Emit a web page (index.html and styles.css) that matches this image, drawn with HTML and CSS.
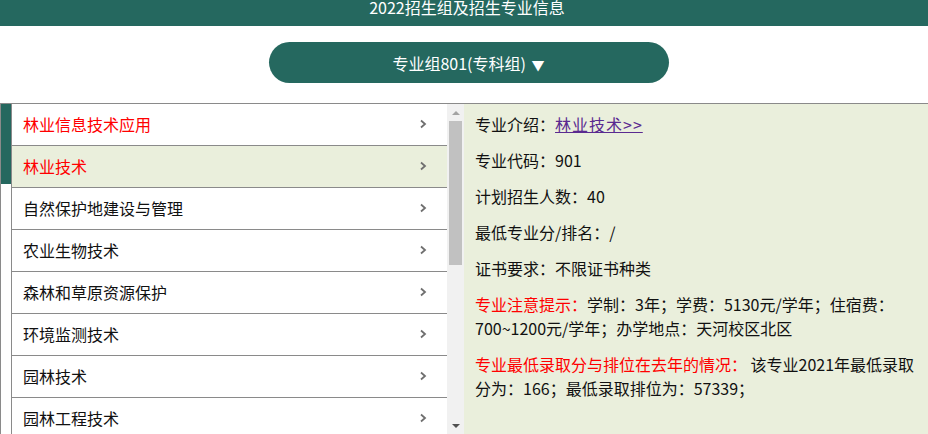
FILE: index.html
```html
<!DOCTYPE html>
<html lang="zh-CN">
<head>
    <meta charset="UTF-8">
    <meta name="viewport" content="width=device-width, initial-scale=1.0">
    <title>2022招生组及招生专业信息</title>
    <link rel="stylesheet" href="styles.css">
</head>
<body>
    <header class="top-bar">
        <h1>2022招生组及招生专业信息</h1>
    </header>

    <div class="group-select">
        <button class="group-btn">专业组801(专科组) <span class="caret">▼</span></button>
    </div>

    <div class="panel">
        <div class="side-mark">
            <div class="mark-bar"></div>
        </div>

        <ul class="major-list">
            <li class="major visited"><span>林业信息技术应用</span><svg class="chev" viewBox="0 0 8 10"><polyline points="2,1.5 6,5 2,8.5"/></svg></li>
            <li class="major active"><span>林业技术</span><svg class="chev" viewBox="0 0 8 10"><polyline points="2,1.5 6,5 2,8.5"/></svg></li>
            <li class="major"><span>自然保护地建设与管理</span><svg class="chev" viewBox="0 0 8 10"><polyline points="2,1.5 6,5 2,8.5"/></svg></li>
            <li class="major"><span>农业生物技术</span><svg class="chev" viewBox="0 0 8 10"><polyline points="2,1.5 6,5 2,8.5"/></svg></li>
            <li class="major"><span>森林和草原资源保护</span><svg class="chev" viewBox="0 0 8 10"><polyline points="2,1.5 6,5 2,8.5"/></svg></li>
            <li class="major"><span>环境监测技术</span><svg class="chev" viewBox="0 0 8 10"><polyline points="2,1.5 6,5 2,8.5"/></svg></li>
            <li class="major"><span>园林技术</span><svg class="chev" viewBox="0 0 8 10"><polyline points="2,1.5 6,5 2,8.5"/></svg></li>
            <li class="major"><span>园林工程技术</span><svg class="chev" viewBox="0 0 8 10"><polyline points="2,1.5 6,5 2,8.5"/></svg></li>
            <li class="major"><span>风景园林设计</span><svg class="chev" viewBox="0 0 8 10"><polyline points="2,1.5 6,5 2,8.5"/></svg></li>
        </ul>

        <!-- fake scrollbar, same look as the browser one -->
        <div class="scrollbar">
            <div class="sb-arrow up"></div>
            <div class="sb-track">
                <div class="sb-thumb"></div>
            </div>
            <div class="sb-arrow down"></div>
        </div>

        <div class="detail">
            <p>专业介绍：<a href="#" class="intro-link">林业技术&gt;&gt;</a></p>
            <p>专业代码：901</p>
            <p>计划招生人数：40</p>
            <p>最低专业分/排名：/</p>
            <p>证书要求：不限证书种类</p>
            <p><span class="hint">专业注意提示：</span>学制：3年；学费：5130元/学年；住宿费：700~1200元/学年；办学地点：天河校区北区</p>
            <p><span class="hint">专业最低录取分与排位在去年的情况：</span> 该专业2021年最低录取分为：166；最低录取排位为：57339；</p>
        </div>
    </div>
</body>
</html>
```

FILE: styles.css
```css
* {
    margin: 0;
    padding: 0;
    box-sizing: border-box;
}

body {
    font-family: "Noto Sans CJK SC", "Noto Sans", sans-serif;
    background: #fff;
    color: #111;
    height: 434px;
    overflow: hidden;
}

.top-bar {
    height: 26px;
    background: #25685f;
    text-align: center;
    overflow: hidden;
}

.top-bar h1 {
    font-size: 16px;
    font-weight: normal;
    color: #fff;
    line-height: 16px;
    margin-top: -1px;
    padding-left: 6px;
}

.group-select {
    display: flex;
    justify-content: center;
    padding: 16px 0 20px 9px;
}

.group-btn {
    width: 400px;
    height: 41px;
    border: none;
    border-radius: 21px;
    background: #25685f;
    color: #fff;
    font-family: inherit;
    font-size: 16px;
}

.caret {
    font-size: 13px;
    margin-left: 2px;
}

.panel {
    display: flex;
    height: 331px;
    border-top: 1px solid #8a8a8a;
    overflow: hidden;
}

.side-mark {
    width: 11px;
    flex-shrink: 0;
    border-left: 1px solid #8a8a8a;
}

.mark-bar {
    height: 80px;
    background: #25685f;
}

.major-list {
    list-style: none;
    width: 436px;
    flex-shrink: 0;
    border-left: 1px solid #8a8a8a;
}

.major {
    display: flex;
    align-items: center;
    justify-content: space-between;
    height: 42px;
    padding: 0 20px 1px 11px;
    border-bottom: 1px solid #8a8a8a;
    font-size: 16px;
    background: #fff;
}

.major.visited,
.major.active {
    color: #ff0000;
}

.major.active {
    background: #eaefdc;
}

.chev {
    width: 8px;
    height: 10px;
    fill: none;
    stroke: #6f6f6f;
    stroke-width: 1.8;
}

.scrollbar {
    width: 17px;
    flex-shrink: 0;
    background: #f1f1f1;
    display: flex;
    flex-direction: column;
}

.sb-arrow {
    height: 17px;
    display: flex;
    align-items: center;
    justify-content: center;
}

.sb-arrow::after {
    content: "";
    border-left: 4px solid transparent;
    border-right: 4px solid transparent;
}

.sb-arrow.up::after {
    border-bottom: 4px solid #a3a3a3;
}

.sb-arrow.down::after {
    border-top: 4px solid #505050;
}

.sb-track {
    flex: 1;
    padding: 0 2px;
}

.sb-thumb {
    height: 144px;
    background: #c1c1c1;
}

.detail {
    flex: 1;
    background: #eaefdc;
    padding: 8px 10px 0 11px;
    font-size: 16px;
    line-height: 24px;
}

.detail p {
    margin-bottom: 12px;
}

.intro-link {
    color: #5a2a90;
    text-decoration: underline;
    letter-spacing: 1px;
}

.hint {
    color: #ff0000;
}
```
